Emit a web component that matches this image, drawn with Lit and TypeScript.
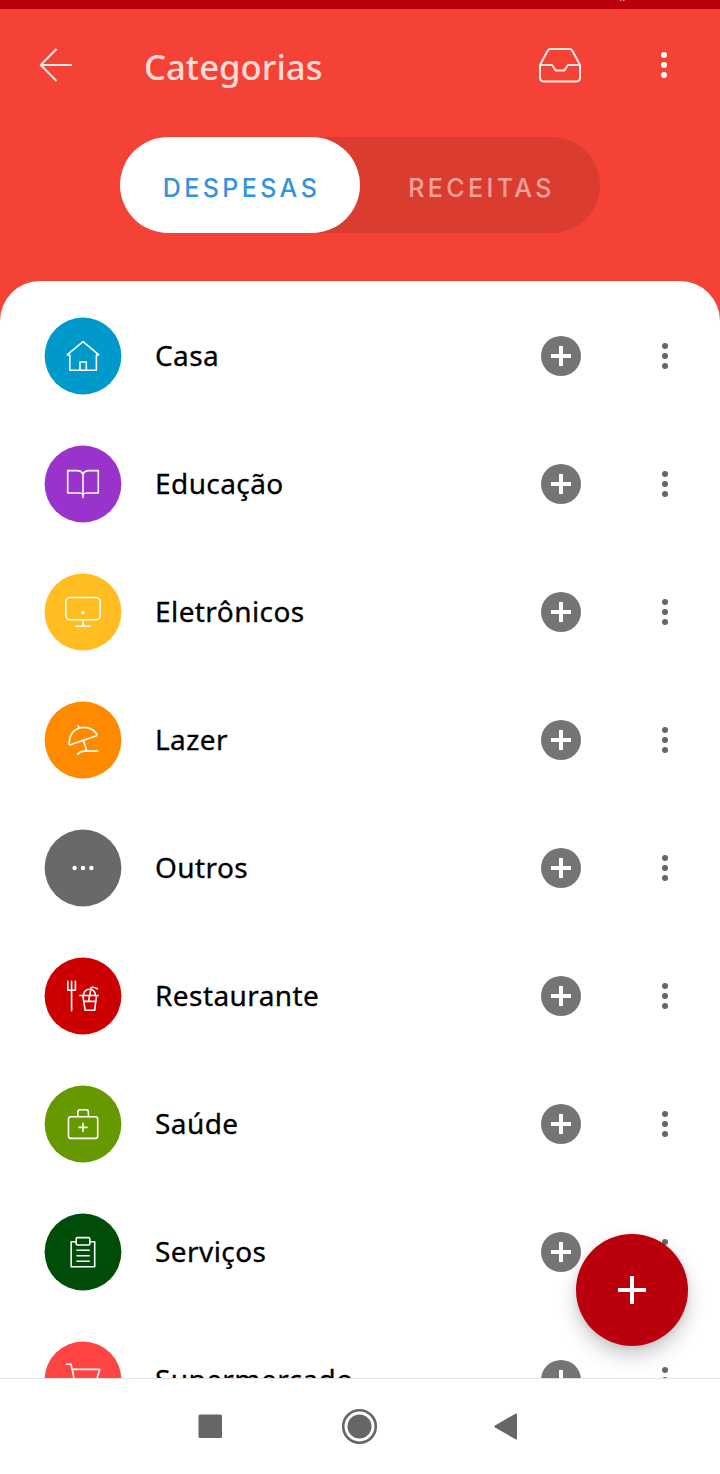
import { LitElement, html, css, svg, SVGTemplateResult } from "lit";
import { customElement, property } from "lit/decorators.js";

// Category glyphs, drawn around the centre of the badge at (0, 0).
const glyphs: Record<string, SVGTemplateResult> = {
  home: svg`<path d="M-13.2 -1H-15.6V-1.4L0 -14.4L15.6 -1.4V-1H13.4V14.3H-13.2Z"/><path d="M-3 14.3V6H3.3V14.3"/>`,
  book: svg`<path d="M0 13.6V-9.5C-1 -12.6 -3 -13.4 -6 -13.4H-15.3V9H-4C-2 9 -.6 9.4 0 11C.6 9.4 2 9 4 9H15.3V-13.4H6C3 -13.4 1 -12.6 0 -9.5"/>`,
  monitor: svg`<rect x="-17.2" y="-14.5" width="34.4" height="22.3" rx="4.5"/><path d="M0 7.8V14.3M-7.2 14.3H7.2"/><circle class="solid" cx="0" cy=".7" r="1.7"/>`,
  umbrella: svg`<path d="M-14 3C-13.5 -4 -10 -9.8 -4 -12C3 -13.8 10.5 -11.5 13.8 -5.8C14 -5 13.8 -4.4 13 -4.1L-12.6 4.7C-13.6 4.9 -14.2 4.3 -14 3Z"/><path d="M-4.8 -14.2L-4 -12M.4 .6L3.8 11.1M-5.4 14.2C-3.5 12 -1.4 11.1 1.5 11.1H14.8"/>`,
  dots: svg`<circle class="solid" cx="-8.4" r="2.2"/><circle class="solid" r="2.2"/><circle class="solid" cx="8.4" r="2.2"/>`,
  meal: svg`<path d="M-15.2 -14.6V-5.8H-7.6V-14.6M-11.4 -14.6V14.8"/><path d="M-3 -.5H15.2M-.2 -.5L2.2 14.3H11.6L13.6 -.5M1 5.4H12.7M.5 -.5C.8 -4.5 3 -6.8 6.6 -6.8C10.2 -6.8 12.2 -4.5 12.6 -.5M5.6 5.2L8.2 -8.5C10 -9.2 12 -8.6 14.4 -7.2"/>`,
  health: svg`<rect x="-14.5" y="-7.3" width="29.2" height="21.7" rx="2.4"/><path d="M-5.2 -7.3V-12C-5.2 -13.6 -4.4 -14.3 -3 -14.3H3.2C4.6 -14.3 5.4 -13.6 5.4 -12V-7.3M0 -.6V7.4M-4 3.4H4"/>`,
  clipboard: svg`<path d="M-7 -10.2H-11.8V14.8H11.7V-10.2H7"/><rect x="-6.8" y="-14.4" width="13.6" height="7.4" rx="1.2"/><path d="M-6 -1.7H6.2M-6 3.7H6.2M-6 9.2H6.2"/>`,
  cart: svg`<path d="M-16.5 -15.7H-12L-7.6 4H12.4L16.7 -10.6H-10.9"/>`,
};

@customElement("more-dots")
class MoreDots extends LitElement {
  static styles = css`
    :host { display: flex; flex-direction: column; align-items: center; gap: 4px; width: 8px; }
    .dot { width: 6px; height: 6px; border-radius: 50%; background: currentColor; }
  `;
  render() {
    return html`<span class="dot"></span><span class="dot"></span><span class="dot"></span>`;
  }
}

@customElement("category-row")
class CategoryRow extends LitElement {
  @property() name = "";
  @property() icon = "";
  @property() color = "";

  static styles = css`
    :host {
      display: grid;
      grid-template-columns: 78px 1fr 40px 88px;
      align-items: center;
      height: 128px;
      padding: 0 51px 0 44px;
      box-sizing: border-box;
    }
    .badge { display: block; width: 78px; height: 78px; fill: none; stroke: #fff; stroke-width: 1.6; stroke-linejoin: round; stroke-linecap: round; }
    .disc { stroke: none; }
    .solid { fill: #fff; stroke: none; }
    .label {
      padding: 0 0 2px 33px;
      font: 400 28px/40px "Noto Sans", sans-serif;
      letter-spacing: 0.42px;
      color: #000;
      -webkit-text-stroke: 0.3px #000;
    }
    .add { display: block; width: 40px; height: 40px; }
    .more { justify-self: end; color: #666; }
  `;
  render() {
    return html`
      <svg class="badge" viewBox="-39 -39 78 78">
        <circle class="disc" r="38.4" fill=${this.color}></circle>
        ${glyphs[this.icon]}
      </svg>
      <span class="label">${this.name}</span>
      <svg class="add" viewBox="0 0 40 40">
        <circle cx="20" cy="20" r="20" fill="#747474" />
        <path d="M20 10V30M10 20H30" stroke="#fff" stroke-width="4" />
      </svg>
      <more-dots class="more"></more-dots>
    `;
  }
}

@customElement("app-root")
class AppRoot extends LitElement {
  private categories = [
    { name: "Casa", icon: "home", color: "#0099cc" },
    { name: "Educação", icon: "book", color: "#9933cc" },
    { name: "Eletrônicos", icon: "monitor", color: "#ffbd21" },
    { name: "Lazer", icon: "umbrella", color: "#ff8a00" },
    { name: "Outros", icon: "dots", color: "#696969" },
    { name: "Restaurante", icon: "meal", color: "#cc0000" },
    { name: "Saúde", icon: "health", color: "#669900" },
    { name: "Serviços", icon: "clipboard", color: "#004d0a" },
    { name: "Supermercado", icon: "cart", color: "#ff4444" },
  ];

  static styles = css`
    :host {
      position: relative;
      display: flex;
      flex-direction: column;
      width: 720px;
      height: 1474px;
      overflow: hidden;
      background: #f44336;
      font-family: "Noto Sans", sans-serif;
    }
    .status { flex: none; height: 9px; background: #b9000c; }
    .status-mark { display: block; width: 5px; height: 1px; margin-left: 620px; }
    .toolbar {
      flex: none;
      display: grid;
      grid-template-columns: 34px 1fr 42px 87px;
      align-items: center;
      height: 112px;
      padding: 0 52px 0 39px;
      color: #fff;
    }
    .back { width: 34px; height: 34px; }
    .inbox { width: 42px; height: 36px; }
    .icon { display: block; fill: none; stroke: #ffe9e6; stroke-width: 2; stroke-linejoin: round; }
    .title { margin: 3px 0 0; padding-left: 71px; font: 500 34.7px/44px "Noto Sans", sans-serif; color: #ffdad6; }
    .menu { justify-self: end; }
    .tabs {
      flex: none;
      display: flex;
      width: 480px;
      height: 96px;
      margin: 16px auto 48px;
      border-radius: 48px;
      background: #db3c30;
    }
    .tab {
      flex: 1;
      display: flex;
      align-items: center;
      justify-content: center;
      border-radius: 48px;
      padding: 5px 0 0 3px;
      box-sizing: border-box;
      font-family: Inter, "Noto Sans", sans-serif;
      font-size: 25px;
      font-weight: 500;
      letter-spacing: 3.4px;
      color: #f6a19b;
    }
    .active { background: #fff; color: #3493de; }
    .sheet {
      flex: 1;
      min-height: 0;
      overflow: hidden;
      padding-top: 11px;
      border-radius: 40px 40px 0 0;
      background: #fff;
    }
    .nav {
      flex: none;
      height: 96px;
      box-sizing: border-box;
      border-top: 1px solid #e2e2e2;
      background: #fff;
      display: flex;
      justify-content: center;
    }
    .keys { display: block; width: 720px; height: 95px; fill: #666; }
    .fab {
      position: absolute;
      left: 576px;
      top: 1234px;
      width: 112px;
      height: 112px;
      border-radius: 50%;
      background: #b9000c;
      box-shadow: 0 10px 20px rgba(0, 0, 0, 0.2), 0 2px 6px rgba(0, 0, 0, 0.08);
    }
    .plus { display: block; width: 112px; height: 112px; }
  `;

  render() {
    return html`
      <div class="status">
        <svg class="status-mark" viewBox="0 0 5 1"><path d="M0 .5H1.5M3 .5H4.5" stroke="#e6a5a8" /></svg>
      </div>
      <header class="toolbar">
        <svg class="icon back" viewBox="0 0 34 34"><path d="M33 17H2M17.5 1L1.7 17L17.5 33" /></svg>
        <h1 class="title">Categorias</h1>
        <svg class="icon inbox" viewBox="0 0 42 36">
          <path d="M1 18L8.8 3.6C9.5 2.2 10.2 2 11.5 2H30.5C31.8 2 32.5 2.2 33.2 3.6L41 18V30.5C41 33.2 39.6 34.4 37 34.4H5C2.4 34.4 1 33.2 1 30.5ZM1 18H13L16.8 23.6H25.2L29 18H41" />
        </svg>
        <more-dots class="menu"></more-dots>
      </header>
      <div class="tabs">
        <div class="tab active">DESPESAS</div>
        <div class="tab">RECEITAS</div>
      </div>
      <main class="sheet">
        ${this.categories.map(
          (c) => html`<category-row .name=${c.name} .icon=${c.icon} .color=${c.color}></category-row>`
        )}
      </main>
      <nav class="nav">
        <svg class="keys" viewBox="0 1379 720 95">
          <rect x="198.5" y="1414.5" width="23.5" height="23.5" rx="1.5" />
          <circle cx="359.5" cy="1426.5" r="12" />
          <circle cx="359.5" cy="1426.5" r="16.3" fill="none" stroke="#666" stroke-width="2.6" />
          <path d="M495 1425.5L515.5 1413.7Q517 1413 517 1414.8V1438.2Q517 1440 515.5 1439.2L495 1427.5Q493.8 1426.5 495 1425.5Z" />
        </svg>
      </nav>
      <div class="fab">
        <svg class="plus" viewBox="0 0 112 112"><path d="M56 42V70M42 56H70" stroke="#fff" stroke-width="4" /></svg>
      </div>
    `;
  }
}
